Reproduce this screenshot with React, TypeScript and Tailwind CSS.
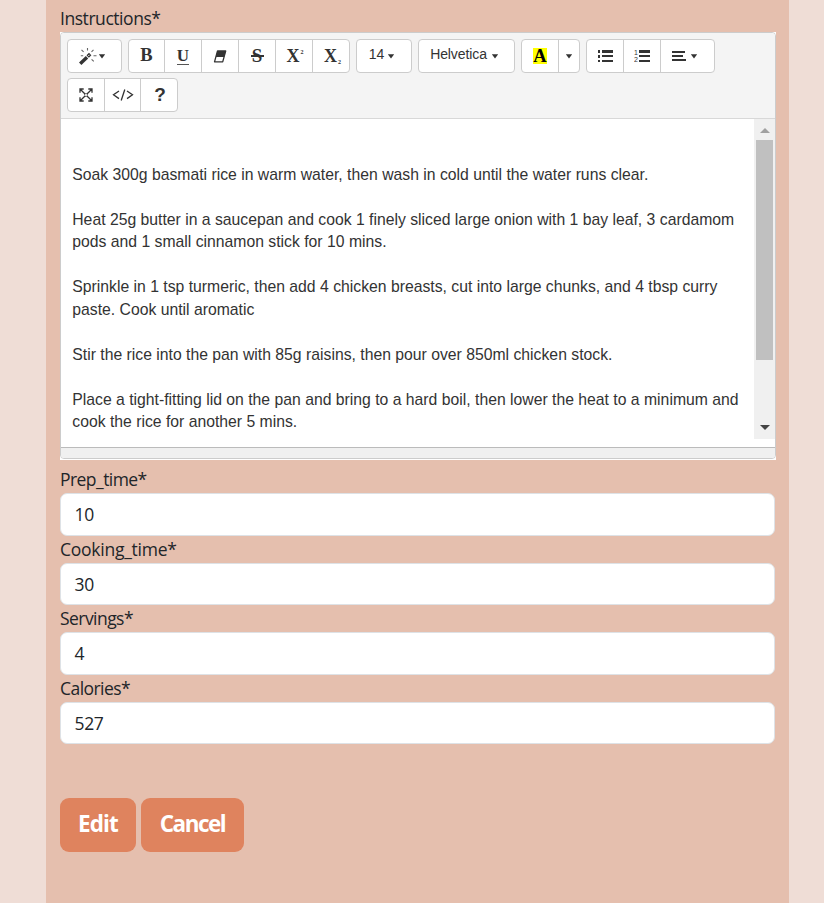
import React from "react";

const cell = "flex items-center justify-center border-r border-[#ccc] last:border-r-0";
const serif = "font-['Liberation_Serif',serif] font-bold text-[#333]";

function Group({ children }: { children: React.ReactNode }) {
  return <div className="flex h-[34px] overflow-hidden rounded-[4px] border border-[#ccc] bg-white text-[#333]">{children}</div>;
}

function Caret() {
  return (
    <svg width="8" height="5" viewBox="0 0 8 5" fill="#333">
      <path d="M0.8 0.3H7.2L4 4.5Z" />
    </svg>
  );
}

function Toolbar() {
  return (
    <div className="flex h-[86px] flex-col gap-[5px] border-b border-[#d8d8d8] bg-[#f4f4f4] pt-[6px] pl-[6px]">
      <div className="flex gap-[6px]">
        <Group>
          <div className={`${cell} w-[53px] pr-[6px]`}>
            <svg width="20" height="19" viewBox="0 0 20 19" fill="none" stroke="#333">
              <path d="M2.2 16.8L9 10.2" strokeWidth="3.4" />
              <path d="M9.7 9.5L12.2 7" strokeWidth="3.4" />
              <path d="M10.3 9L11.5 7.8" stroke="#fff" strokeWidth="1" />
              <path d="M9.5 1V3.5M3.5 2.8L5.6 4.8M15.5 2.8L13.5 4.8M2.8 8.7H5.2M15.5 8.7H18.5M13.6 12.3L15.8 14.4" strokeWidth="1.1" strokeOpacity="0.75" />
            </svg>
            <Caret />
          </div>
        </Group>
        <Group>
          <div className={`${cell} ${serif} w-[36px] text-[18.5px]`}>B</div>
          <div className={`${cell} ${serif} w-[37px] text-[17px]`}>
            <span className="mt-[1px] h-[16px] border-b border-[#555] leading-[14px]">U</span>
          </div>
          <div className={`${cell} w-[37px]`}>
            <svg width="14" height="13" viewBox="0 0 14 13">
              <path d="M4.5 1H12.7L9.7 11.8H1.5Z" fill="#fff" stroke="#333" strokeWidth="1.3" strokeLinejoin="round" />
              <path d="M4.4 1H12.7L11.1 6.9H2.9Z" fill="#333" />
            </svg>
          </div>
          <div className={`${cell} ${serif} w-[37px] text-[19px]`}>
            <span className="relative">
              S<span className="absolute top-[13px] -left-[1px] h-[2px] w-[13px] bg-[#333]" />
            </span>
          </div>
          <div className={`${cell} ${serif} w-[37px] text-[18px]`}>
            <span className="ml-[2px]">X</span>
            <span className="mb-[8px] ml-[1px] text-[6px] leading-[6px]">2</span>
          </div>
          <div className={`${cell} ${serif} w-[36px] text-[18px]`}>
            <span className="ml-[3px]">X</span>
            <span className="mt-[12px] ml-[1px] text-[6px] leading-[6px]">2</span>
          </div>
        </Group>
        <Group>
          <div className={`${cell} w-[54px] gap-[3px] pr-[4px] text-[14px]`}>
            <span className="mb-[3px]">14</span>
            <Caret />
          </div>
        </Group>
        <Group>
          <div className={`${cell} w-[95px] gap-[4px] pr-[4px] text-[14px] tracking-[-0.1px]`}>
            <span className="mb-[3px]">Helvetica</span>
            <Caret />
          </div>
        </Group>
        <Group>
          <div className={`${cell} w-[37px]`}>
            <span className="mb-[1px] h-[16px] w-[14px] bg-[#ff0] text-center font-['Liberation_Serif',serif] text-[18.5px] leading-[17px] font-bold text-black">A</span>
          </div>
          <div className={`${cell} w-[20px]`}>
            <Caret />
          </div>
        </Group>
        <Group>
          <div className={`${cell} w-[37px]`}>
            <svg width="17" height="13" viewBox="0 0 17 13" fill="#333" shapeRendering="crispEdges">
              <path d="M1 0H3V3H1ZM1 5H3V8H1ZM1 10H3V12H1ZM5 0H16V3H5ZM5 5H16V7H5ZM5 10H16V12H5Z" />
            </svg>
          </div>
          <div className={`${cell} w-[37px]`}>
            <svg width="16" height="14" viewBox="0 0 16 14" fill="#333">
              <text x="0" y="6" fontSize="7" fontFamily="Liberation Sans">1</text>
              <text x="0" y="13" fontSize="7" fontFamily="Liberation Sans">2</text>
              <path d="M5 1H16V4H5ZM5 6H16V8H5ZM5 11H16V13H5Z" shapeRendering="crispEdges" />
            </svg>
          </div>
          <div className={`${cell} w-[53px] gap-[4px] pr-[6px]`}>
            <svg width="14" height="12" viewBox="0 0 14 12" fill="#333" shapeRendering="crispEdges">
              <path d="M0 1H13V3H0ZM0 5H11V7H0ZM0 9H14V11H0Z" />
            </svg>
            <Caret />
          </div>
        </Group>
      </div>
      <div className="flex">
        <Group>
          <div className={`${cell} w-[37px]`}>
            <svg width="14" height="14" viewBox="0 0 14 14" fill="none" stroke="#333" strokeWidth="1.3">
              <path d="M1.5 1.5L12.5 12.5M12.5 1.5L1.5 12.5M1 4.7V1H4.7M9.3 1H13V4.7M13 9.3V13H9.3M4.7 13H1V9.3" />
              <path d="M7 5.2L8.8 7L7 8.8L5.2 7Z" strokeWidth="0.7" fill="#fff" />
            </svg>
          </div>
          <div className={`${cell} w-[36px]`}>
            <svg width="22" height="12" viewBox="0 0 22 12" fill="none" stroke="#333" strokeWidth="1.3">
              <path d="M7 2L1.5 5.8L7 9.6M15 2L20.5 5.8L15 9.6M12.8 0.5L9.2 11.5" />
            </svg>
          </div>
          <div className={`${cell} w-[36px] pl-[2px] text-[19px] font-bold`}>?</div>
        </Group>
      </div>
    </div>
  );
}

const lines = [
  "", "",
  "Soak 300g basmati rice in warm water, then wash in cold until the water runs clear.",
  "",
  "Heat 25g butter in a saucepan and cook 1 finely sliced large onion with 1 bay leaf, 3 cardamom",
  "pods and 1 small cinnamon stick for 10 mins.",
  "",
  "Sprinkle in 1 tsp turmeric, then add 4 chicken breasts, cut into large chunks, and 4 tbsp curry",
  "paste. Cook until aromatic",
  "",
  "Stir the rice into the pan with 85g raisins, then pour over 850ml chicken stock.",
  "",
  "Place a tight-fitting lid on the pan and bring to a hard boil, then lower the heat to a minimum and",
  "cook the rice for another 5 mins.",
];

function Editor() {
  return (
    <div className="h-[428px] w-[716px] bg-white font-['Liberation_Sans',Arial,sans-serif]">
      <div className="flex h-[427px] flex-col overflow-hidden rounded-[4px] border border-[#ccc]">
        <Toolbar />
        <div className="flex h-[320px]">
          <div className="w-[693px] shrink-0 overflow-hidden pl-[11.25px] text-[15.75px] leading-[22.5px] whitespace-nowrap text-[#333]">
            <div className="-mt-[0.2px]">
              {lines.map((l, i) => (
                <div key={i} className="h-[22.5px]">{l}</div>
              ))}
            </div>
          </div>
          <div className="flex w-[21px] flex-col items-center bg-[#f0f0f0]">
            <div className="flex h-[21px] items-center pt-[2px]">
              <svg width="10" height="5" viewBox="0 0 10 5" fill="#a0a0a0"><path d="M0 5L5 0L10 5Z" /></svg>
            </div>
            <div className="h-[220px] w-[17px] bg-[#c0c0c0]" />
            <div className="mt-[65px]">
              <svg width="10" height="5" viewBox="0 0 10 5" fill="#444"><path d="M0 0L5 5L10 0Z" /></svg>
            </div>
          </div>
        </div>
        <div className="mt-[8px] flex-1 border-t border-[#bbb] bg-[#f0f0f0]" />
      </div>
    </div>
  );
}

const fields = [
  { label: "Prep_time*", value: "10" },
  { label: "Cooking_time*", value: "30" },
  { label: "Servings*", value: "4" },
  { label: "Calories*", value: "527" },
];

export default function App() {
  return (
    <div className="h-[903px] w-[824px] overflow-hidden bg-[#efddd6] pl-[46px]">
      <div className="h-full w-[743px] bg-[#e5bfae] pt-[5px] pl-[14px] font-['Open_Sans','Noto_Sans',sans-serif] text-[17.5px] text-[#212529]">
        <div className="h-[27px] leading-[27px] tracking-[-0.45px]">Instructions*</div>
        <Editor />
        <div className="mt-[6.2px]">
          {fields.map((f) => (
            <div key={f.label}>
              <div className={`h-[27px] leading-[27px] ${f.label === "Cooking_time*" ? "tracking-[-0.25px]" : "tracking-[-0.55px]"}`}>{f.label}</div>
              <div className="flex h-[42.5px] w-[715px] items-center rounded-[7px] border border-[#dee2e6] bg-white pl-[13.5px] tracking-[-0.35px]">{f.value}</div>
            </div>
          ))}
        </div>
        <div className="mt-[53.8px] flex gap-[5px] text-[22.5px] font-bold text-white">
          <button className="h-[54px] w-[76px] rounded-[9px] bg-[#df835e] pb-[3px] tracking-[-0.9px]">Edit</button>
          <button className="h-[54px] w-[103px] rounded-[9px] bg-[#df835e] pb-[3px] tracking-[-1.5px]">Cancel</button>
        </div>
      </div>
    </div>
  );
}
